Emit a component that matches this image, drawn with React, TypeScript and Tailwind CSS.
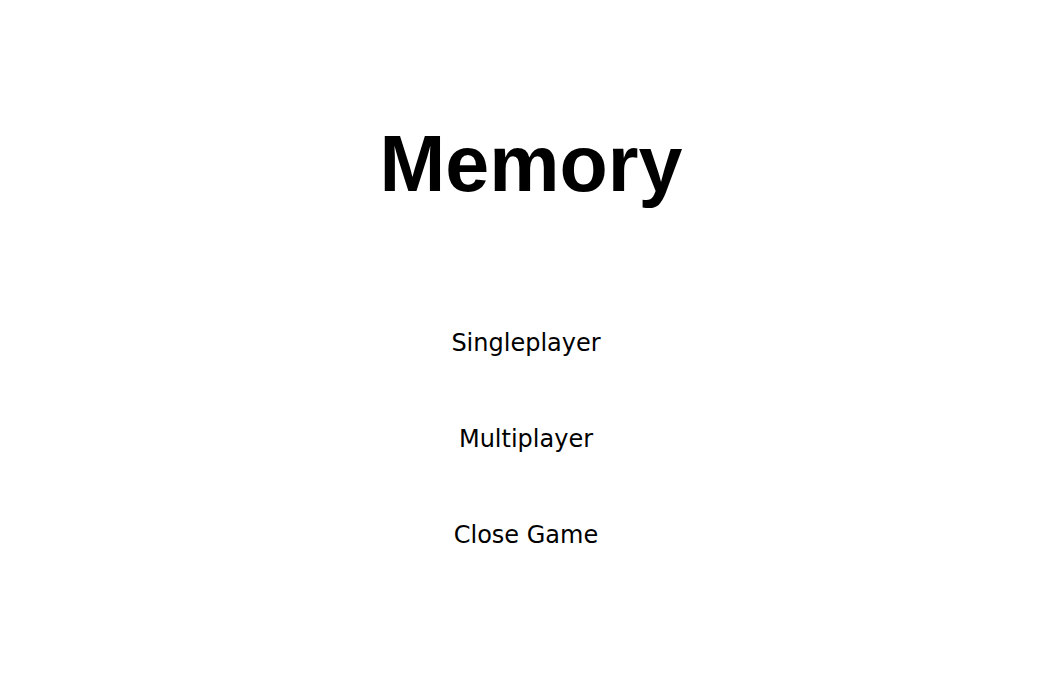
const items = ["Singleplayer", "Multiplayer", "Close Game"];

export default function App() {
  return (
    <div className="flex h-[685px] w-full flex-col items-center bg-white text-black">
      <h1 className="mt-[118px] pl-[10px] font-['Liberation_Sans',Arial,sans-serif] text-[79px] font-bold leading-[92px]">
        Memory
      </h1>
      <div className="mt-[117px] flex flex-col items-center gap-[64px]">
        {items.map((item) => (
          <button
            key={item}
            className="h-[32px] font-['DejaVu_Sans',Tahoma,sans-serif] text-[24px] leading-[32px]"
          >
            {item}
          </button>
        ))}
      </div>
    </div>
  );
}
